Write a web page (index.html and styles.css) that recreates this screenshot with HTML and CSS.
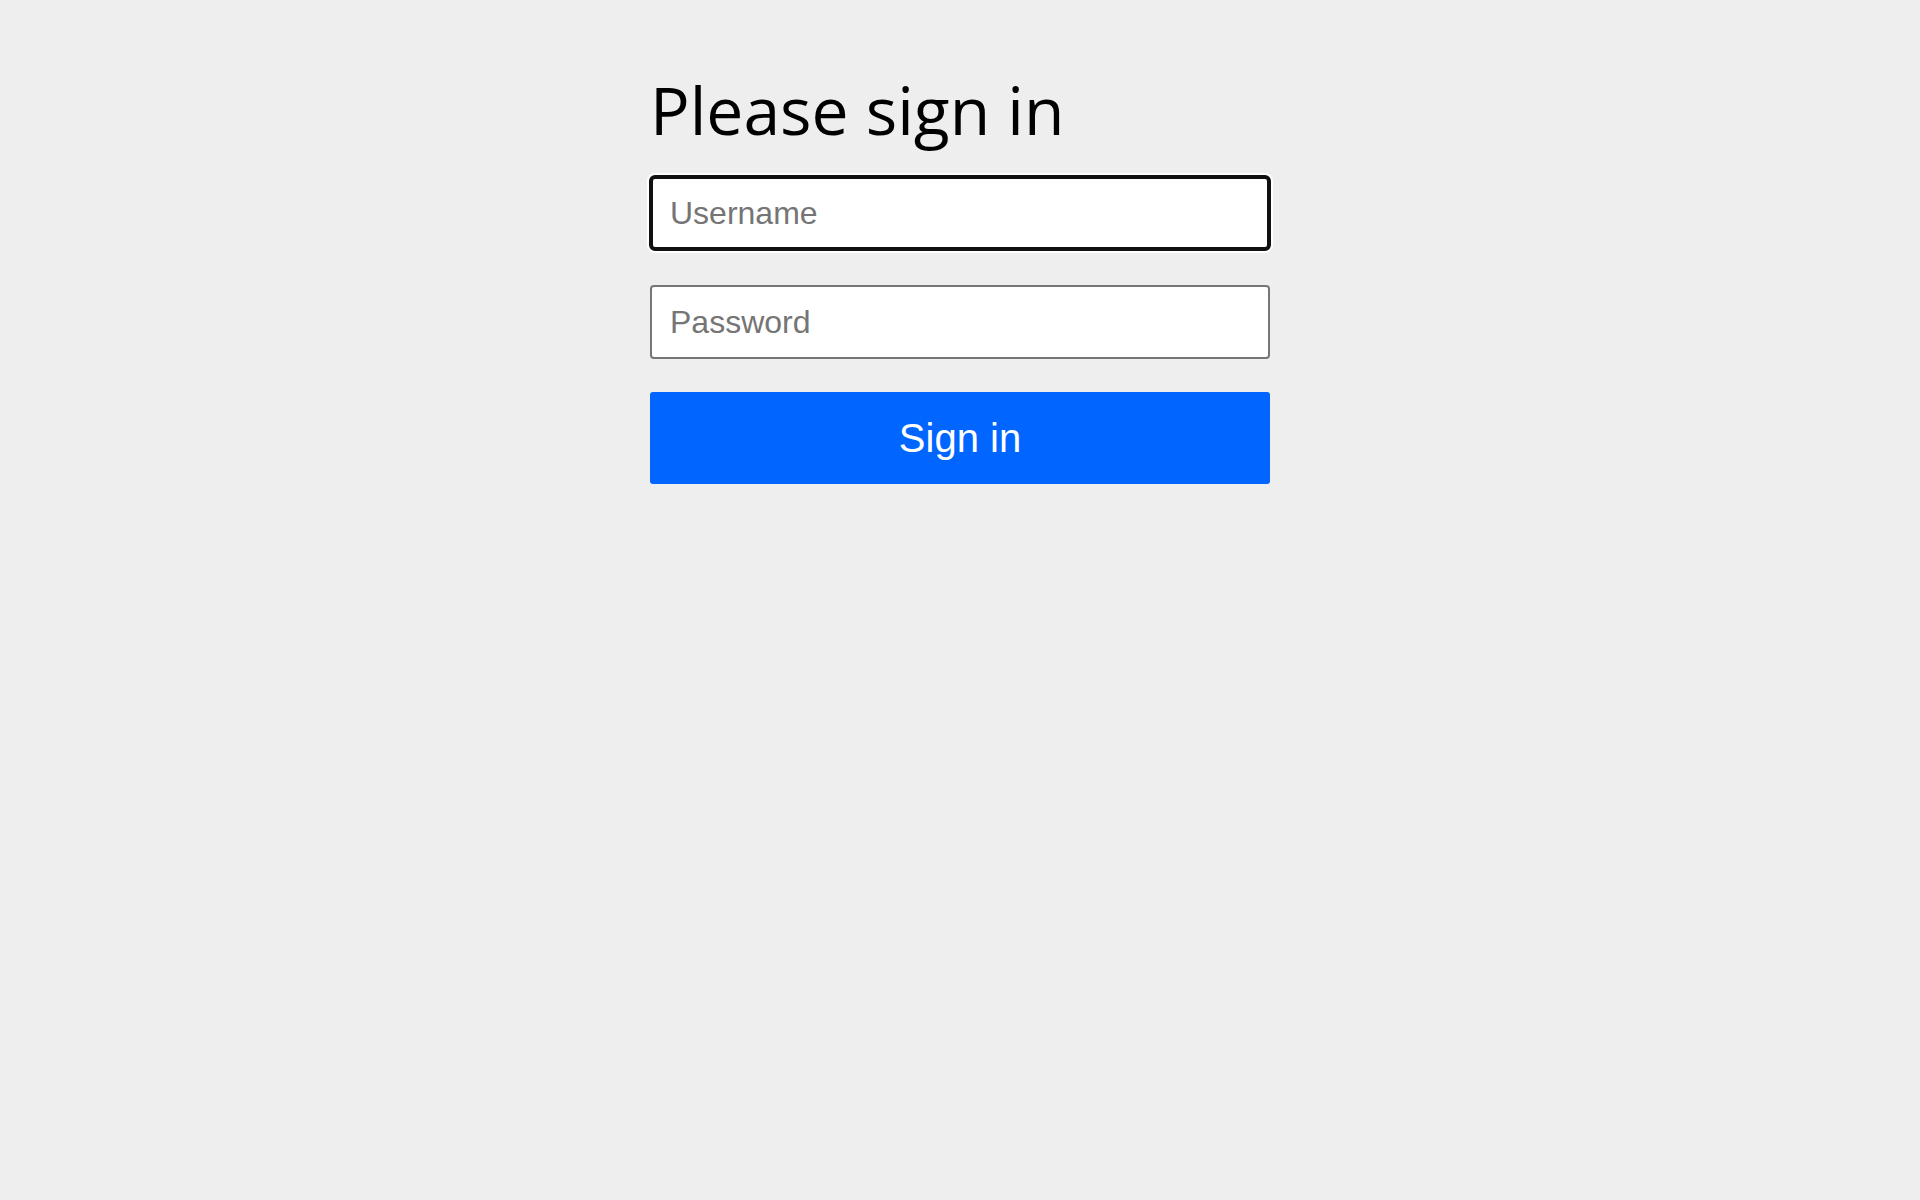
FILE: index.html
```html
<!DOCTYPE html>
<html lang="en">
<head>
<meta charset="utf-8">
<title>Please sign in</title>
<link rel="stylesheet" href="styles.css">
</head>
<body>
<main class="content">
  <form class="login-form">
    <h2 class="heading">Please sign in</h2>
    <input class="field field-focus" type="text" name="username" placeholder="Username">
    <input class="field" type="password" name="password" placeholder="Password">
    <button class="primary" type="button">Sign in</button>
  </form>
</main>
</body>
</html>
```
FILE: styles.css
```css
html, body {
  margin: 0;
  padding: 0;
  background-color: #eeeeee;
}

body {
  font-family: "Open Sans", "Noto Sans", sans-serif;
  color: #000;
}

.content {
  padding-top: 77px;
}

.login-form {
  width: 620px;
  margin: 0 auto;
  display: flex;
  flex-direction: column;
}

.heading {
  margin: 0 0 35px 0;
  font-size: 66px;
  font-weight: 400;
  line-height: 64px;
  color: #000;
}

.field {
  box-sizing: border-box;
  width: 100%;
  height: 74px;
  margin: 0 0 33px 0;
  padding: 0 16px 0 18px;
  border: 2px solid #767676;
  border-radius: 4px;
  background: #fff;
  font-family: "Liberation Sans", Arial, sans-serif;
  font-size: 32px;
  color: #000;
  outline: none;
}

.field::placeholder {
  color: #757575;
  opacity: 1;
}

.field-focus {
  margin-bottom: 35px;
  border: 3px solid #101010;
  padding-left: 17px;
  outline: 2px solid #101010;
  outline-offset: -1px;
  box-shadow: 0 0 0 3px #ffffff;
  border-radius: 5px;
}

.primary {
  box-sizing: border-box;
  width: 100%;
  height: 92px;
  padding: 0 32px;
  border: none;
  border-radius: 3px;
  background-color: #0066ff;
  color: #fff;
  font-family: "Liberation Sans", Arial, sans-serif;
  font-size: 40px;
  line-height: 60px;
  cursor: pointer;
}
```
